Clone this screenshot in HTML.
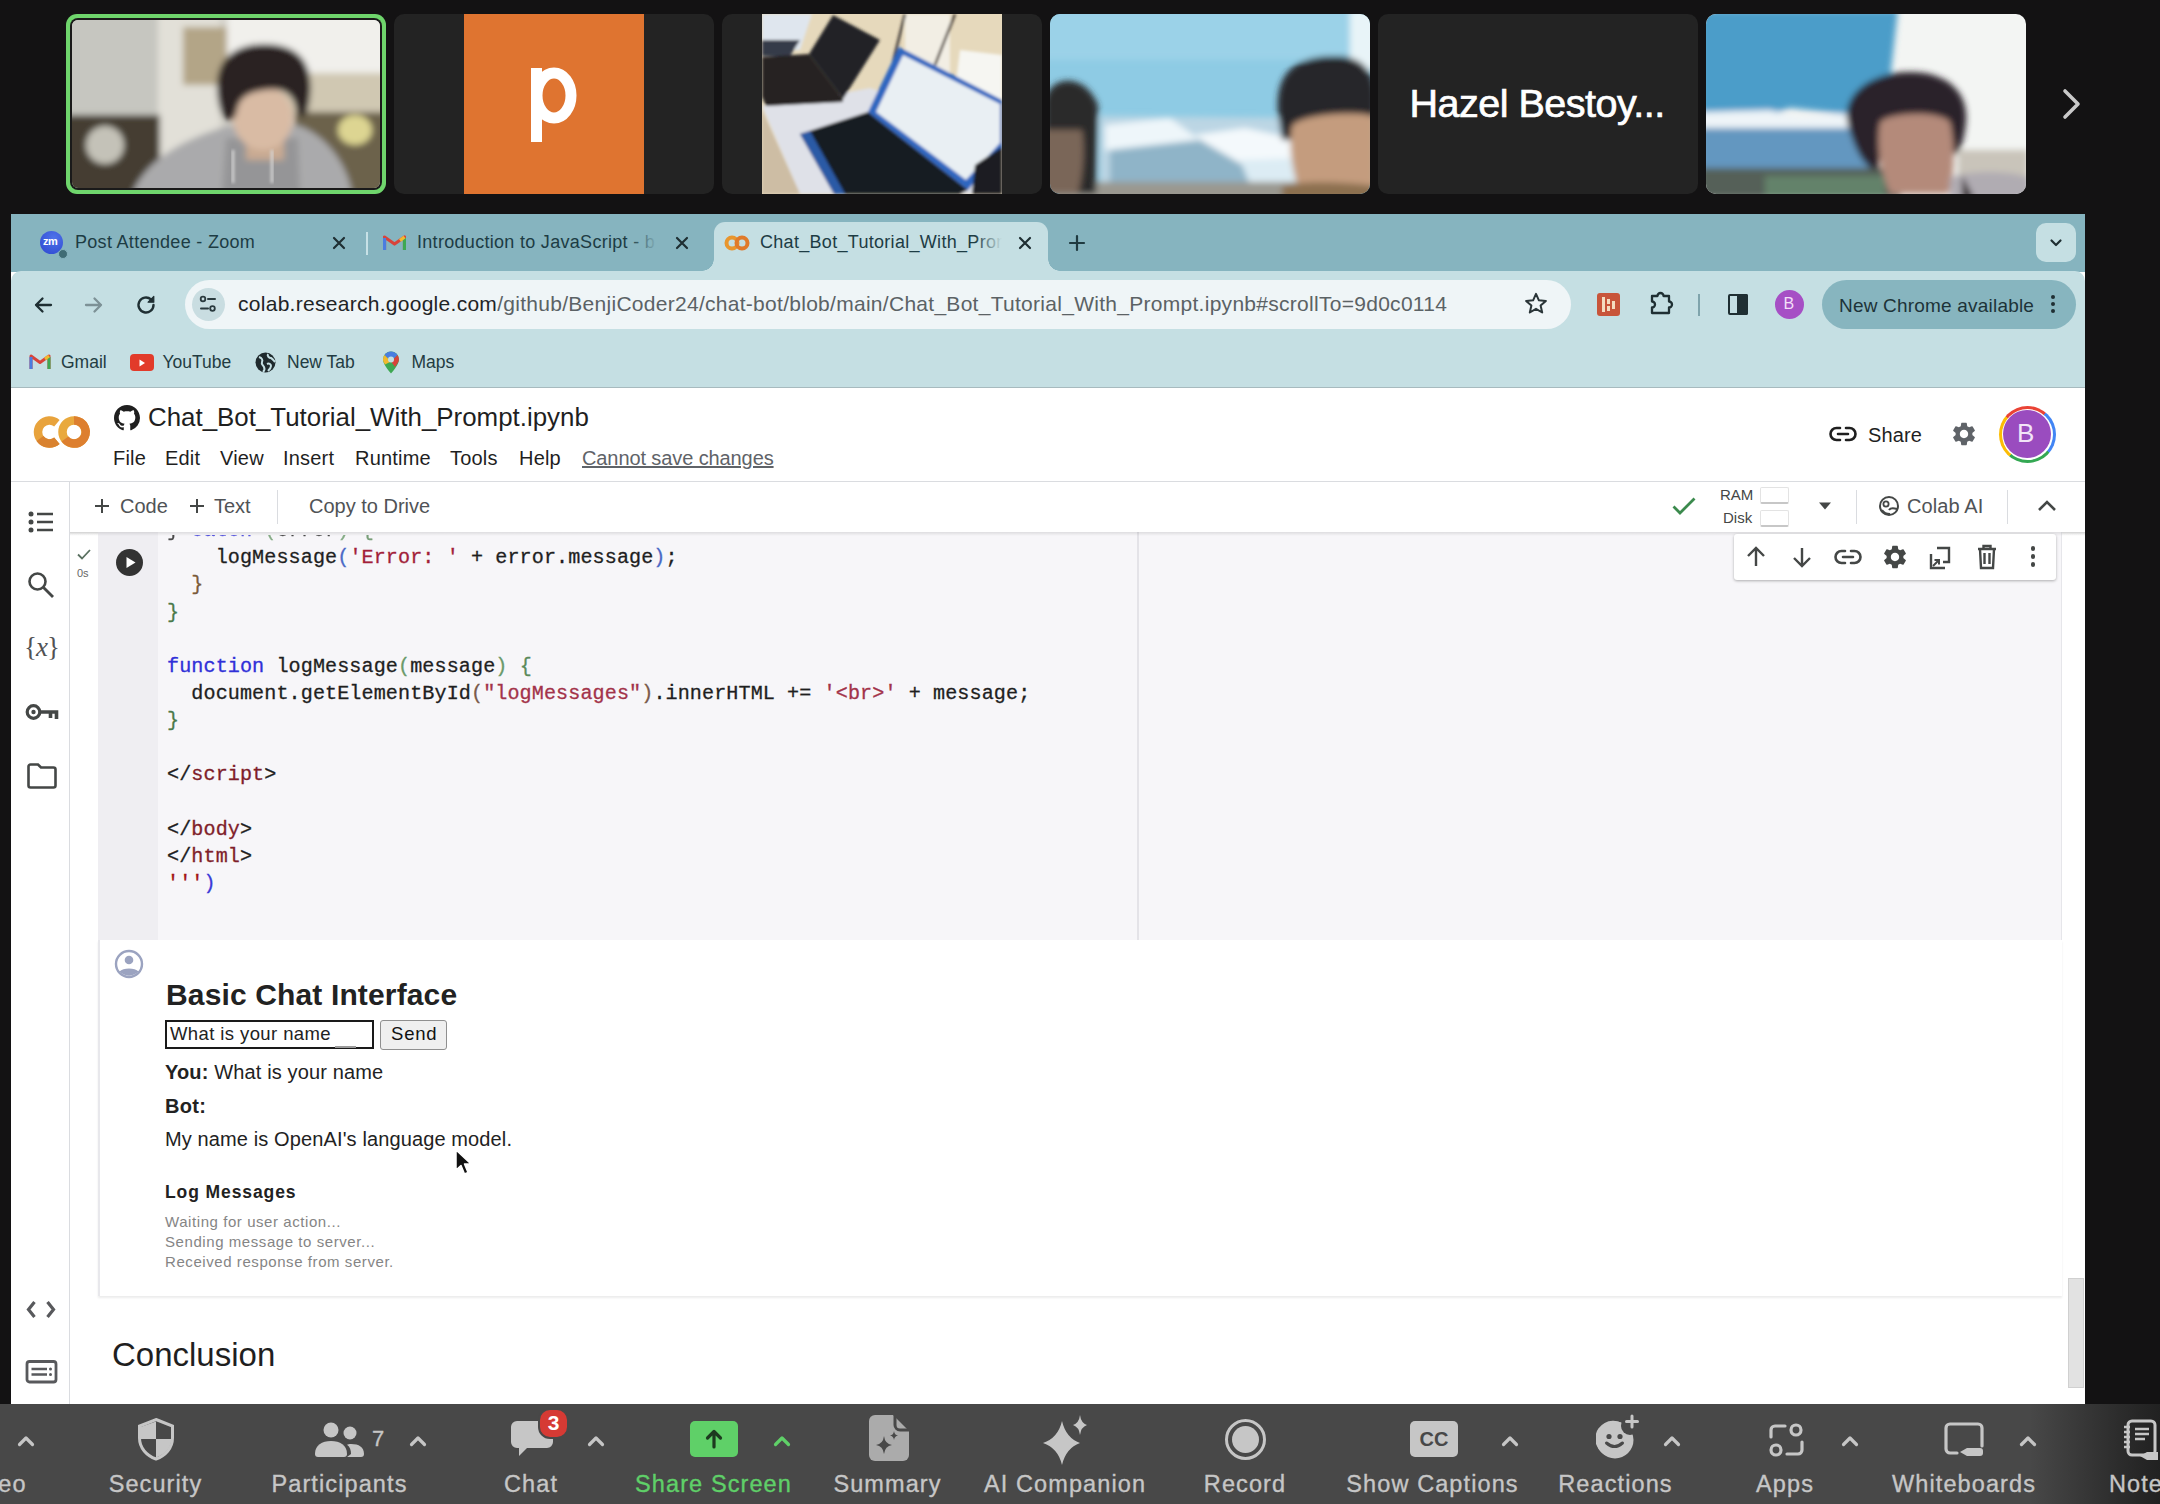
<!DOCTYPE html>
<html><head><meta charset="utf-8">
<style>
*{margin:0;padding:0;box-sizing:border-box}
html,body{width:2160px;height:1504px;overflow:hidden;background:#131213;font-family:"Liberation Sans",sans-serif}
.a{position:absolute}
.t{position:absolute;white-space:nowrap;line-height:1}
.mono{font-family:"Liberation Mono",monospace}
.tile{position:absolute;top:14px;width:320px;height:180px;border-radius:10px;background:#232323;overflow:hidden}
svg{display:block}
</style></head>
<body>
<!--STRIP-->
<svg class="a" style="left:0;top:0" width="2160" height="210" viewBox="0 0 2160 210">
<defs>
<filter id="b3" x="-5%" y="-5%" width="110%" height="110%"><feGaussianBlur stdDeviation="3"/></filter>
<filter id="b2" x="-5%" y="-5%" width="110%" height="110%"><feGaussianBlur stdDeviation="1.6"/></filter>
<clipPath id="c1"><rect x="72" y="20" width="308" height="168" rx="6"/></clipPath>
<clipPath id="c3"><rect x="762" y="14" width="240" height="180"/></clipPath>
<clipPath id="c4"><rect x="1050" y="14" width="320" height="180" rx="10"/></clipPath>
<clipPath id="c6"><rect x="1706" y="14" width="320" height="180" rx="10"/></clipPath>
</defs>
<!-- tile1 -->
<rect x="66" y="14" width="320" height="180" rx="11" fill="#6fd56c"/>
<rect x="70" y="18" width="312" height="172" rx="8" fill="#1a1a1a"/>
<g clip-path="url(#c1)">
 <rect x="72" y="20" width="308" height="168" fill="#d2d0c8"/>
 <g filter="url(#b3)">
  <rect x="60" y="10" width="100" height="105" fill="#c6c6c0"/>
  <rect x="158" y="10" width="62" height="190" fill="#e2e0d8"/>
  <rect x="183" y="27" width="44" height="58" fill="#b3a587"/>
  <rect x="227" y="10" width="160" height="65" fill="#f1f0ec"/>
  <rect x="227" y="73" width="160" height="42" fill="#d0c8b2"/>
  <rect x="60" y="115" width="100" height="90" fill="#443c31"/>
  <ellipse cx="105" cy="145" rx="19" ry="19" fill="#c4c2b8"/>
  <rect x="295" y="112" width="95" height="90" fill="#6c624b"/>
  <ellipse cx="355" cy="130" rx="17" ry="15" fill="#ddd592"/>
  <path d="M132 194C145 160 185 138 228 126H300C330 138 348 168 352 194Z" fill="#aaaaac"/>
  <path d="M222 194L226 138H298L300 194Z" fill="#959597"/>
  <rect x="246" y="135" width="38" height="25" fill="#c9aa92"/>
  <ellipse cx="263" cy="118" rx="30" ry="32" fill="#d9bba4"/>
  <path d="M219 105C210 62 232 44 264 44C300 44 316 64 309 104C306 120 298 122 295 104C290 90 278 88 264 90C250 92 240 96 237 110C234 126 223 124 219 105Z" fill="#2b2420"/>
 </g>
 <path d="M233 150V183M272 150V183" stroke="#d8d8d8" stroke-width="2.5" filter="url(#b2)"/>
</g>
<!-- tile2 -->
<rect x="394" y="14" width="320" height="180" rx="10" fill="#232323"/>
<rect x="464" y="14" width="180" height="180" fill="#df7430"/>
<path d="M536.5 68V142" stroke="#fff" stroke-width="11"/>
<ellipse cx="554" cy="95.5" rx="17" ry="22.5" fill="none" stroke="#fff" stroke-width="11"/>
<!-- tile3 -->
<rect x="722" y="14" width="320" height="180" rx="10" fill="#232323"/>
<g clip-path="url(#c3)">
 <rect x="762" y="14" width="240" height="180" fill="#e6d9bc"/>
 <g filter="url(#b2)">
  <rect x="905" y="14" width="45" height="100" fill="#f2eee4"/>
  <path d="M905 14L893 62" stroke="#3a3530" stroke-width="2.5"/>
  <path d="M955 14L935 65" stroke="#4a4038" stroke-width="2.5"/>
  <path d="M960 50L1002 55V100L955 90Z" fill="#f6f6f2"/>
  <path d="M762 106L808 100L870 88L1002 130V194H800Z" fill="#dfe1e8"/>
  <path d="M762 110L800 194H762Z" fill="#cdbda4"/>
  <path d="M762 14H812L800 50H762Z" fill="#dfe6ee"/>
  <path d="M762 40H800L790 56H762Z" fill="#353a48"/>
  <path d="M833 15L880 40L843 99L809 54Z" fill="#222325"/>
  <path d="M762 57L809 54L843 99V102L766 106L762 97Z" fill="#252222"/>
  <path d="M899 47L1002 100V147L968 190L868 112Z" fill="#2e66c0"/>
  <path d="M903 55L1000 104V143L966 180L876 112Z" fill="#e9eff3"/>
  <path d="M800 134L868 112L968 190L960 194H834Z" fill="#161a24"/>
  <path d="M800 134L810 131L845 194H834Z" fill="#2c5aa6"/>
  <path d="M975 165L1002 147V194H972Z" fill="#1c1c20"/>
 </g>
</g>
<!-- tile4 -->
<g clip-path="url(#c4)">
 <rect x="1050" y="14" width="320" height="180" fill="#8ecbe4"/>
 <g filter="url(#b3)">
  <rect x="1040" y="10" width="340" height="50" fill="#9bd2e8"/>
  <rect x="1350" y="10" width="30" height="60" fill="#e8f4f8"/>
  <path d="M1100 116L1310 118L1330 194H1100Z" fill="#bcd6e4"/>
  <path d="M1105 125L1170 118L1200 140L1180 150L1105 150Z" fill="#eef6fa"/>
  <path d="M1195 135L1245 128L1300 140L1300 160L1230 165Z" fill="#f4f9fc"/>
  <path d="M1110 150L1200 140L1260 175L1270 194H1110Z" fill="#8fb4c8"/>
  <path d="M1240 160L1300 158L1300 185H1250Z" fill="#dcecf4"/>
  <rect x="1040" y="182" width="340" height="20" fill="#9a9890"/>
  <path d="M1045 100C1050 75 1085 72 1098 105L1096 194H1045Z" fill="#2c2a2c"/>
  <path d="M1040 130H1082C1085 150 1083 175 1078 194H1040Z" fill="#7a6658"/>
  <path d="M1278 112C1275 68 1300 56 1335 56C1370 56 1378 80 1375 112L1375 140H1282Z" fill="#27272c"/>
  <path d="M1292 126C1300 114 1360 110 1375 117V194H1300C1292 170 1288 145 1292 126Z" fill="#c49c7e"/>
  <path d="M1282 186C1300 181 1340 181 1375 186V200H1282Z" fill="#8c7050"/>
 </g>
</g>
<!-- tile5 -->
<rect x="1378" y="14" width="320" height="180" rx="10" fill="#232323"/>
<!-- tile6 -->
<g clip-path="url(#c6)">
 <rect x="1706" y="14" width="320" height="180" fill="#f3f5f3"/>
 <g filter="url(#b3)">
  <path d="M1700 10H1898L1890 80L1882 118L1790 108L1770 115L1700 112Z" fill="#4c9dc9"/>
  <path d="M1700 112L1770 110L1800 118L1860 112L1875 128V135H1700Z" fill="#eef4f8"/>
  <path d="M1700 128H1870L1878 172H1700Z" fill="#6497c0"/>
  <rect x="1700" y="168" width="200" height="30" fill="#556058"/>
  <rect x="1765" y="176" width="120" height="22" fill="#63826b"/>
  <rect x="1958" y="150" width="70" height="28" fill="#c9c4ba"/>
  <path d="M1848 125C1840 95 1870 72 1910 72C1950 72 1972 95 1965 130C1962 150 1955 160 1950 150L1945 120H1885L1878 170C1865 170 1855 150 1848 125Z" fill="#29232a"/>
  <path d="M1880 122C1890 112 1940 110 1950 122C1956 150 1954 178 1948 194H1890C1880 170 1876 145 1880 122Z" fill="#b48a7a"/>
  <path d="M1950 178C1968 170 2010 170 2030 178V200H1950Z" fill="#b0acb2"/>
  <path d="M1962 175L1975 200H1962Z" fill="#3a3234"/>
 </g>
</g>
<!-- chevron -->
<path d="M2065 91L2078 104L2065 117" fill="none" stroke="#c9c9c9" stroke-width="3.6" stroke-linecap="round" stroke-linejoin="round"/>
</svg>
<div class="t" style="left:1409.5px;top:84.3px;color:#fff;font-size:39.5px;letter-spacing:-0.5px;-webkit-text-stroke:0.7px #fff">Hazel Bestoy...</div>
<!--/STRIP-->

<!--CHROME-->

<div class="a" style="left:11px;top:214px;width:2074px;height:1190px;background:#fff"></div>
<div class="a" style="left:11px;top:214px;width:2074px;height:58px;background:#86b4bf"></div>
<div class="a" style="left:11px;top:271px;width:2074px;height:116px;background:#c5dfe3;border-radius:10px 10px 0 0"></div>
<div class="a" style="left:11px;top:387px;width:2074px;height:1px;background:#a7babe"></div>
<!-- active tab -->
<div class="a" style="left:714px;top:222px;width:334px;height:52px;background:#c5dfe3;border-radius:11px 11px 0 0"></div>
<div class="a" style="left:702px;top:259px;width:12px;height:12px;background:radial-gradient(circle at 0 0,#86b4bf 11.5px,#c5dfe3 12px)"></div>
<div class="a" style="left:1048px;top:259px;width:12px;height:12px;background:radial-gradient(circle at 100% 0,#86b4bf 11.5px,#c5dfe3 12px)"></div>
<!-- tab1 -->
<div class="a" style="left:39.5px;top:231px;width:23px;height:23px;border-radius:50%;background:radial-gradient(circle at 60% 30%,#4f73ea,#2c46cf)"></div>
<div class="t" style="left:43px;top:236px;font-size:11px;color:#fff;font-weight:bold;letter-spacing:-0.5px">zm</div>
<div class="a" style="left:58px;top:249px;width:10px;height:10px;border-radius:50%;background:#3f6c75;border:1.5px solid #86b4bf"></div>
<div class="t" style="left:75px;top:233.1px;font-size:18px;letter-spacing:0.3px;color:#1d3c44">Post Attendee - Zoom</div>
<svg class="a" style="left:332px;top:236px" width="14" height="14" viewBox="0 0 14 14"><path d="M2 2L12 12M12 2L2 12" stroke="#1f2f33" stroke-width="2.2" stroke-linecap="round"/></svg>
<div class="a" style="left:366px;top:232px;width:2px;height:23px;background:#c7e1e6"></div>
<!-- tab2 -->
<svg class="a" style="left:383px;top:234px" width="23" height="17" viewBox="0 0 23 17"><path d="M1.5 16V3L11.5 10L21.5 3V16" fill="none" stroke="#d8433a" stroke-width="3.2" stroke-linejoin="round"/><path d="M1.5 16V4" stroke="#4a7de0" stroke-width="3.2"/><path d="M21.5 16V4" stroke="#3ea852" stroke-width="3.2"/><path d="M17 6.5L21.5 3" stroke="#f2b92e" stroke-width="3.2"/></svg>
<div class="t" style="left:417px;top:233.1px;font-size:18px;letter-spacing:0.3px;color:#1d3c44">Introduction to JavaScript - b</div>
<div class="a" style="left:630px;top:228px;width:34px;height:32px;background:linear-gradient(90deg,rgba(134,180,191,0),#86b4bf 80%)"></div>
<svg class="a" style="left:675px;top:236px" width="14" height="14" viewBox="0 0 14 14"><path d="M2 2L12 12M12 2L2 12" stroke="#1f2f33" stroke-width="2.2" stroke-linecap="round"/></svg>
<!-- tab3 -->
<svg class="a" style="left:724px;top:235px" width="26" height="16" viewBox="0 0 26 16"><circle cx="8" cy="8" r="5.5" fill="none" stroke="#e8962e" stroke-width="4"/><circle cx="18" cy="8" r="5.5" fill="none" stroke="#e07a2a" stroke-width="4"/></svg>
<div class="t" style="left:760px;top:228px;height:30px;padding-top:5.1px;width:246px;overflow:hidden;font-size:18px;letter-spacing:0.3px;color:#1d3c44">Chat_Bot_Tutorial_With_Prom</div>
<div class="a" style="left:975px;top:228px;width:34px;height:32px;background:linear-gradient(90deg,rgba(197,223,227,0),#c5dfe3 80%)"></div>
<svg class="a" style="left:1018px;top:236px" width="14" height="14" viewBox="0 0 14 14"><path d="M2 2L12 12M12 2L2 12" stroke="#1f2f33" stroke-width="2.2" stroke-linecap="round"/></svg>
<svg class="a" style="left:1068px;top:234px" width="18" height="18" viewBox="0 0 18 18"><path d="M9 2V16M2 9H16" stroke="#1f3a40" stroke-width="2.2" stroke-linecap="round"/></svg>
<!-- tab dropdown -->
<div class="a" style="left:2036px;top:223px;width:40px;height:39px;border-radius:10px;background:#c5dfe3"></div>
<svg class="a" style="left:2048px;top:235px" width="16" height="16" viewBox="0 0 16 16"><path d="M3.5 5.5L8 10L12.5 5.5" fill="none" stroke="#1f2f33" stroke-width="2.2" stroke-linecap="round" stroke-linejoin="round"/></svg>
<!-- nav -->
<svg class="a" style="left:31px;top:293px" width="24" height="24" viewBox="0 0 24 24"><path d="M20 12H5M11.5 5.5L5 12L11.5 18.5" fill="none" stroke="#1f2f33" stroke-width="2.3" stroke-linecap="round" stroke-linejoin="round"/></svg>
<svg class="a" style="left:82px;top:293px" width="24" height="24" viewBox="0 0 24 24"><path d="M4 12H19M12.5 5.5L19 12L12.5 18.5" fill="none" stroke="#7d9196" stroke-width="2.3" stroke-linecap="round" stroke-linejoin="round"/></svg>
<svg class="a" style="left:134px;top:293px" width="24" height="24" viewBox="0 0 24 24"><path d="M19.5 12A7.5 7.5 0 1 1 17 6.4" fill="none" stroke="#1f2f33" stroke-width="2.4" stroke-linecap="round"/><path d="M19.8 3.5V9.2H14.1Z" fill="#1f2f33" stroke="#1f2f33" stroke-width="1.2" stroke-linejoin="round"/></svg>
<!-- omnibox -->
<div class="a" style="left:185px;top:280px;width:1386px;height:49px;border-radius:25px;background:#eff5f7"></div>
<div class="a" style="left:191.5px;top:287.5px;width:33px;height:33px;border-radius:50%;background:#c9dde1"></div>
<svg class="a" style="left:198px;top:294px" width="20" height="20" viewBox="0 0 20 20"><circle cx="5" cy="5" r="2.3" fill="none" stroke="#2a3a3e" stroke-width="1.8"/><path d="M10 5H17" stroke="#2a3a3e" stroke-width="2" stroke-linecap="round"/><circle cx="14.5" cy="14.5" r="2.3" fill="none" stroke="#2a3a3e" stroke-width="1.8"/><path d="M3 14.5H10" stroke="#2a3a3e" stroke-width="2" stroke-linecap="round"/></svg>
<div class="t" style="left:238px;top:293.2px;font-size:21px;letter-spacing:0.28px;color:#1f2426">colab.research.google.com<span style="color:#5b6265">/github/BenjiCoder24/chat-bot/blob/main/Chat_Bot_Tutorial_With_Prompt.ipynb#scrollTo=9d0c0114</span></div>
<svg class="a" style="left:1523px;top:291px" width="26" height="26" viewBox="0 0 26 26"><path d="M13 2.8L15.9 9.3L22.9 9.9L17.6 14.6L19.2 21.5L13 17.8L6.8 21.5L8.4 14.6L3.1 9.9L10.1 9.3Z" fill="none" stroke="#2a3538" stroke-width="2" stroke-linejoin="round"/></svg>
<!-- ext icons -->
<div class="a" style="left:1597px;top:293px;width:23px;height:23px;border-radius:3px;background:#c8553a"></div>
<div class="a" style="left:1602px;top:297px;width:3px;height:15px;background:#f4dcc0"></div>
<div class="a" style="left:1607px;top:299px;width:3px;height:5px;background:#f4dcc0"></div>
<div class="a" style="left:1607px;top:306px;width:3px;height:5px;background:#f4dcc0"></div>
<div class="a" style="left:1612px;top:301px;width:3px;height:8px;background:#f4dcc0"></div>
<svg class="a" style="left:1647px;top:290px" width="28" height="28" viewBox="0 0 28 28"><path d="M4 8H9.5A3 3 0 0 1 15.5 8H21V13.5A3 3 0 0 1 21 19.5V25H4V19.5A3 3 0 0 0 4 13.5Z" fill="none" stroke="#1f2f33" stroke-width="2.3" stroke-linejoin="round" transform="translate(1,-2)"/></svg>
<div class="a" style="left:1698px;top:294px;width:2px;height:22px;background:#7fa4ac"></div>
<div class="a" style="left:1728px;top:294px;width:20px;height:21px;border:2.4px solid #1f2f33;border-radius:2px"></div>
<div class="a" style="left:1737px;top:294px;width:11px;height:21px;background:#1f2f33;border-radius:0 2px 2px 0"></div>
<div class="a" style="left:1775px;top:290px;width:29px;height:29px;border-radius:50%;background:#a64fc5"></div>
<div class="t" style="left:1783.5px;top:296px;font-size:16px;color:#f3dff8">B</div>
<div class="a" style="left:1822px;top:280px;width:254px;height:49px;border-radius:25px;background:#87b5bf"></div>
<div class="t" style="left:1839px;top:296.3px;font-size:19px;letter-spacing:0.2px;color:#1d3338">New Chrome available</div>
<div class="a" style="left:2051px;top:295px;width:4px;height:4px;border-radius:50%;background:#1f2f33;box-shadow:0 7px 0 #1f2f33,0 14px 0 #1f2f33"></div>
<!-- bookmarks -->
<svg class="a" style="left:29px;top:353px" width="22" height="17" viewBox="0 0 22 17"><path d="M2 16V3L11 9.5L20 3V16" fill="none" stroke="#d8433a" stroke-width="3" stroke-linejoin="round"/><path d="M2 16V4" stroke="#4a7de0" stroke-width="3"/><path d="M20 16V4" stroke="#3ea852" stroke-width="3"/><path d="M16 6L20 3" stroke="#f2b92e" stroke-width="3"/></svg>
<div class="t" style="left:61px;top:353.6px;font-size:17.5px;color:#233c42">Gmail</div>
<div class="a" style="left:130px;top:354px;width:24px;height:17px;border-radius:4px;background:#e23b2a"></div>
<svg class="a" style="left:137px;top:358px" width="10" height="10" viewBox="0 0 10 10"><path d="M2.5 1.5L8 5L2.5 8.5Z" fill="#fff"/></svg>
<div class="t" style="left:162.5px;top:353.6px;font-size:17.5px;color:#233c42">YouTube</div>
<svg class="a" style="left:254px;top:351px" width="23" height="23" viewBox="0 0 23 23"><circle cx="11.5" cy="11.5" r="10" fill="#1f2a2d"/><path d="M5 6C8 7 9 9 8 11C7 13 9 14 10 16C11 18 10 20 9 21M14 3C13 5 15 7 17 7C19 8 20 10 21 11M13 13C15 12 17 13 17 15C17 17 15 19 14 20" fill="none" stroke="#c5dfe3" stroke-width="2"/></svg>
<div class="t" style="left:287px;top:353.6px;font-size:17.5px;color:#233c42">New Tab</div>
<svg class="a" style="left:381px;top:350px" width="20" height="25" viewBox="0 0 20 25"><path d="M10 1.5A8 8 0 0 0 2 9.5C2 15 10 23.5 10 23.5S18 15 18 9.5A8 8 0 0 0 10 1.5Z" fill="#3ea852"/><path d="M10 1.5A8 8 0 0 0 3.5 5L10 11.5L16.5 5A8 8 0 0 0 10 1.5Z" fill="#4a7de0"/><path d="M3.5 5A8 8 0 0 0 2 9.5C2 11 3 13 4 14.5L10 11.5Z" fill="#f2b92e"/><path d="M16.5 5L10 11.5L14 17C16 14 18 11.5 18 9.5A8 8 0 0 0 16.5 5Z" fill="#d8433a"/><circle cx="10" cy="9.5" r="3" fill="#c5dfe3"/></svg>
<div class="t" style="left:411.5px;top:353.6px;font-size:17.5px;color:#233c42">Maps</div>


<!-- COLAB HEADER -->
<svg class="a" style="left:32px;top:413px" width="60" height="38" viewBox="0 0 60 38"><path d="M24.9 10.2A11.5 11.5 0 1 0 24.9 27.8" fill="none" stroke="#e8a33c" stroke-width="8.5"/><path d="M8 25.5A11.5 11.5 0 0 0 24.9 27.8" fill="none" stroke="#d9822f" stroke-width="8.5"/><circle cx="42" cy="19" r="11.5" fill="none" stroke="#e9a93d" stroke-width="8.5"/><path d="M42 7.5A11.5 11.5 0 0 1 50 27.5A11.5 11.5 0 0 1 33 26" fill="none" stroke="#dd7f2f" stroke-width="8.5"/></svg>
<svg class="a" style="left:114px;top:405px" width="26" height="26" viewBox="0 0 16 16"><path fill="#1f1f1f" d="M8 0C3.58 0 0 3.58 0 8c0 3.54 2.29 6.53 5.47 7.59.4.07.55-.17.55-.38 0-.19-.01-.82-.01-1.49-2.01.37-2.53-.49-2.69-.94-.09-.23-.48-.94-.82-1.13-.28-.15-.68-.52-.01-.53.63-.01 1.08.58 1.23.82.72 1.21 1.87.87 2.33.66.07-.52.28-.87.51-1.07-1.78-.2-3.64-.89-3.640-3.950 0-.87.31-1.590.82-2.150-.08-.2-.36-1.020.08-2.120 0 0 .67-.21 2.200.82.64-.18 1.32-.27 2-.27.68 0 1.36.09 2 .27 1.53-1.040 2.200-.82 2.200-.82.44 1.100.16 1.920.08 2.120.51.56.82 1.270.82 2.150 0 3.070-1.870 3.750-3.650 3.950.29.25.54.73.54 1.480 0 1.070-.01 1.930-.01 2.200 0 .21.15.46.55.38A8.013 8.013 0 0016 8c0-4.420-3.580-8-8-8z"/></svg>
<div class="t" style="left:148px;top:405px;font-size:25.9px;color:#1f1f1f">Chat_Bot_Tutorial_With_Prompt.ipynb</div>
<div class="t" style="left:113px;top:448px;font-size:20px;letter-spacing:0.2px;color:#1f1f1f">File</div>
<div class="t" style="left:165px;top:448px;font-size:20px;letter-spacing:0.2px;color:#1f1f1f">Edit</div>
<div class="t" style="left:220px;top:448px;font-size:20px;letter-spacing:0.2px;color:#1f1f1f">View</div>
<div class="t" style="left:283px;top:448px;font-size:20px;letter-spacing:0.2px;color:#1f1f1f">Insert</div>
<div class="t" style="left:355px;top:448px;font-size:20px;letter-spacing:0.2px;color:#1f1f1f">Runtime</div>
<div class="t" style="left:450px;top:448px;font-size:20px;letter-spacing:0.2px;color:#1f1f1f">Tools</div>
<div class="t" style="left:519px;top:448px;font-size:20px;letter-spacing:0.2px;color:#1f1f1f">Help</div>
<div class="t" style="left:582px;top:448px;font-size:20px;letter-spacing:-0.1px;color:#5f6368;text-decoration:underline">Cannot save changes</div>
<svg class="a" style="left:1829px;top:422px" width="28" height="24" viewBox="0 0 28 24"><path d="M11 6H7.5A6 6 0 0 0 7.5 18H11M17 6H20.5A6 6 0 0 1 20.5 18H17M9 12H19" fill="none" stroke="#1f1f1f" stroke-width="2.6" stroke-linecap="round"/></svg>
<div class="t" style="left:1868px;top:424.5px;font-size:20px;letter-spacing:0.1px;color:#1f1f1f">Share</div>
<svg class="a" style="left:1950px;top:420px" width="28" height="28" viewBox="0 0 24 24"><path fill="#5f6368" d="M19.14 12.94c.04-.3.06-.61.06-.94 0-.32-.02-.64-.07-.94l2.03-1.58a.49.49 0 0 0 .12-.61l-1.92-3.32a.488.488 0 0 0-.59-.22l-2.39.96c-.5-.38-1.03-.7-1.62-.94l-.36-2.54a.484.484 0 0 0-.48-.41h-3.84c-.24 0-.43.17-.47.41l-.36 2.54c-.59.24-1.13.57-1.62.94l-2.39-.96c-.22-.08-.47 0-.59.22L2.74 8.87c-.12.21-.08.47.12.61l2.03 1.58c-.05.3-.09.63-.09.94s.02.64.07.94l-2.030 1.580a.49.49 0 0 0-.12.61l1.92 3.32c.12.22.37.29.59.22l2.39-.96c.5.38 1.03.7 1.62.94l.36 2.54c.05.24.24.41.48.41h3.84c.24 0 .44-.17.47-.41l.36-2.54c.59-.24 1.13-.56 1.62-.94l2.39.96c.22.08.47 0 .59-.22l1.92-3.32c.12-.22.07-.47-.12-.61l-2.01-1.58zM12 15.6c-1.98 0-3.6-1.62-3.6-3.6s1.62-3.6 3.6-3.6 3.6 1.62 3.6 3.6-1.62 3.6-3.6 3.6z"/></svg>
<div class="a" style="left:1998.5px;top:405.5px;width:57px;height:57px;border-radius:50%;background:conic-gradient(from -50deg,#ea4335 0 25%,#4285f4 25% 50%,#34a853 50% 75%,#fbbc05 75% 100%)"></div>
<div class="a" style="left:2001.5px;top:408.5px;width:51px;height:51px;border-radius:50%;background:#fff"></div>
<div class="a" style="left:2003px;top:410px;width:48px;height:48px;border-radius:50%;background:#9a4cbf"></div>
<div class="t" style="left:2017px;top:420px;font-size:26px;color:#f2e4f7">B</div>
<div class="a" style="left:11px;top:481px;width:2074px;height:1px;background:#dadce0"></div>
<!-- COLAB TOOLBAR -->
<div class="a" style="left:69px;top:482px;width:1px;height:922px;background:#dadce0"></div>
<svg class="a" style="left:93px;top:497px" width="18" height="18" viewBox="0 0 18 18"><path d="M9 2V16M2 9H16" stroke="#444746" stroke-width="2"/></svg>
<div class="t" style="left:120px;top:496.1px;font-size:20px;color:#505356">Code</div>
<svg class="a" style="left:188px;top:497px" width="18" height="18" viewBox="0 0 18 18"><path d="M9 2V16M2 9H16" stroke="#444746" stroke-width="2"/></svg>
<div class="t" style="left:214px;top:496.1px;font-size:20px;color:#505356">Text</div>
<div class="a" style="left:277px;top:490px;width:1px;height:34px;background:#dadce0"></div>
<div class="t" style="left:309px;top:496.1px;font-size:20px;color:#505356">Copy to Drive</div>
<svg class="a" style="left:1671px;top:495px" width="26" height="22" viewBox="0 0 26 22"><path d="M2.5 11.5L9 18L23.5 3.5" fill="none" stroke="#3b8a4d" stroke-width="2.8"/></svg>
<div class="t" style="left:1720px;top:487px;font-size:15px;color:#444746">RAM</div>
<div class="t" style="left:1723px;top:510px;font-size:15px;color:#444746">Disk</div>
<div class="a" style="left:1760px;top:487px;width:29px;height:17px;border:1px solid #e3e3e3;border-bottom:2px solid #c7c7c7;border-radius:2px"></div>
<div class="a" style="left:1760px;top:510px;width:29px;height:17px;border:1px solid #e3e3e3;border-bottom:2px solid #c7c7c7;border-radius:2px"></div>
<svg class="a" style="left:1816px;top:500px" width="18" height="12" viewBox="0 0 18 12"><path d="M3 2.5H15L9 9.5Z" fill="#444746"/></svg>
<div class="a" style="left:1856px;top:490px;width:1px;height:34px;background:#dadce0"></div>
<svg class="a" style="left:1878px;top:495px" width="22" height="22" viewBox="0 0 22 22"><circle cx="11" cy="11" r="9" fill="none" stroke="#444746" stroke-width="2"/><circle cx="8" cy="9" r="2.6" fill="none" stroke="#444746" stroke-width="1.8"/><path d="M11 15C13 12 16 13 19 14M4 15C6 18 9 19 12 19" fill="none" stroke="#444746" stroke-width="2"/></svg>
<div class="t" style="left:1907px;top:496.3px;font-size:20px;letter-spacing:0.1px;color:#505356">Colab AI</div>
<div class="a" style="left:2007px;top:490px;width:1px;height:34px;background:#dadce0"></div>
<svg class="a" style="left:2036px;top:497px" width="22" height="18" viewBox="0 0 22 18"><path d="M3 13L11 5L19 13" fill="none" stroke="#444746" stroke-width="2.6"/></svg>
<div class="a" style="left:70px;top:532px;width:2015px;height:3px;background:linear-gradient(rgba(0,0,0,0.09),rgba(0,0,0,0))"></div>

<!-- SIDEBAR ICONS -->
<svg class="a" style="left:27px;top:508px" width="28" height="28" viewBox="0 0 28 28"><circle cx="4" cy="6" r="2.5" fill="#444746"/><circle cx="4" cy="14" r="2.5" fill="#444746"/><circle cx="4" cy="22" r="2.5" fill="#444746"/><path d="M10 6H26M10 14H26M10 22H26" stroke="#444746" stroke-width="2.4"/></svg>
<svg class="a" style="left:26px;top:570px" width="30" height="30" viewBox="0 0 30 30"><circle cx="11.5" cy="11.5" r="8" fill="none" stroke="#444746" stroke-width="2.6"/><path d="M17.5 17.5L27 27" stroke="#444746" stroke-width="2.8"/></svg>
<div class="t" style="left:24px;top:634px;font-size:27px;letter-spacing:-1px;color:#515254;font-family:'Liberation Serif',serif">{<i>x</i>}</div>
<svg class="a" style="left:25px;top:700px" width="34" height="24" viewBox="0 0 34 24"><circle cx="8.5" cy="12" r="6.3" fill="none" stroke="#444746" stroke-width="3.2"/><circle cx="8.5" cy="12" r="2.2" fill="#444746"/><path d="M14.5 12H31.5V19M25.5 12V18" fill="none" stroke="#444746" stroke-width="3.6"/></svg>
<svg class="a" style="left:26px;top:762px" width="32" height="28" viewBox="0 0 32 28"><path d="M2.5 4.5A2 2 0 0 1 4.5 2.5H12L15 5.5H27.5A2 2 0 0 1 29.5 7.5V23.5A2 2 0 0 1 27.5 25.5H4.5A2 2 0 0 1 2.5 23.5Z" fill="none" stroke="#444746" stroke-width="2.6"/></svg>
<svg class="a" style="left:24px;top:1298px" width="34" height="24" viewBox="0 0 34 24"><path d="M10.5 4L4.5 11.5L10.5 19M23.5 4L29.5 11.5L23.5 19" fill="none" stroke="#58595c" stroke-width="3.2"/></svg><svg class="a" style="left:24px;top:1358px" width="34" height="28" viewBox="0 0 34 28"><rect x="3" y="3.5" width="29" height="20.5" rx="2.5" fill="none" stroke="#58595c" stroke-width="2.8"/><path d="M7.5 11H23M7.5 16.5H23" stroke="#58595c" stroke-width="2.6"/><circle cx="26.5" cy="11" r="1.5" fill="#58595c"/><circle cx="26.5" cy="16.5" r="1.5" fill="#58595c"/></svg>

<!-- CODE CELL -->
<div class="a" style="left:98px;top:532px;width:1964px;height:408px;background:#f7f6f9"></div>
<div class="a" style="left:98px;top:532px;width:60px;height:408px;background:#efeef2"></div>
<div class="a" style="left:1137px;top:532px;width:2px;height:408px;background:#e4e3e8"></div>
<div class="a" style="left:2061px;top:532px;width:1px;height:408px;background:#e6e6ea"></div>
<svg class="a" style="left:76px;top:547px" width="16" height="14" viewBox="0 0 16 14"><path d="M2 7.5L6 11.5L14 3" fill="none" stroke="#5a7060" stroke-width="1.8"/></svg>
<div class="t" style="left:77px;top:568px;font-size:11px;color:#666">0s</div>
<div class="a" style="left:115.5px;top:548.5px;width:27px;height:27px;border-radius:50%;background:#333"></div>
<svg class="a" style="left:115.5px;top:548.5px" width="27" height="27" viewBox="0 0 27 27"><path d="M10.5 8L19.5 13.5L10.5 19Z" fill="#fff"/></svg>
<div class="a mono" style="left:167px;top:535px;width:960px;height:397px;overflow:hidden;font-size:20.1px;letter-spacing:0.1px;line-height:27.15px;color:#1f1f1f;white-space:pre;-webkit-text-stroke:0.3px"><div style="height:27.15px;margin-top:-17.8px;opacity:0.8"><span style="color:#1f1f1f">}</span> <span style="color:#3030d8">catch</span> <span style="color:#6a9a6a">(</span>error<span style="color:#6a9a6a">)</span> <span style="color:#5a8a5a">{</span></div><div style="height:27.15px">    logMessage<span style="color:#4b69c6">(</span><span style="color:#a31f3a">'Error: '</span> + error.message<span style="color:#4b69c6">)</span>;</div><div style="height:27.15px">  <span style="color:#7a5a3a">}</span></div><div style="height:27.15px"><span style="color:#4a7a4a">}</span></div><div style="height:27.15px"></div><div style="height:27.15px"><span style="color:#3030d8">function</span> logMessage<span style="color:#6a9a6a">(</span>message<span style="color:#6a9a6a">)</span> <span style="color:#5a8a5a">{</span></div><div style="height:27.15px">  document.getElementById<span style="color:#7a5a4a">(</span><span style="color:#a3334a">"logMessages"</span><span style="color:#7a5a4a">)</span>.innerHTML += <span style="color:#a3334a">'&lt;br&gt;'</span> + message;</div><div style="height:27.15px"><span style="color:#4a7a4a">}</span></div><div style="height:27.15px"></div><div style="height:27.15px">&lt;/<span style="color:#7f1e2a">script</span>&gt;</div><div style="height:27.15px"></div><div style="height:27.15px">&lt;/<span style="color:#7f1e2a">body</span>&gt;</div><div style="height:27.15px">&lt;/<span style="color:#7f1e2a">html</span>&gt;</div><div style="height:27.15px"><span style="color:#a31515">'''</span><span style="color:#3a3ad8">)</span></div></div>
<div class="a" style="left:70px;top:532px;width:2015px;height:4px;background:linear-gradient(rgba(0,0,0,0.10),rgba(0,0,0,0))"></div>
<!-- cell toolbar -->
<div class="a" style="left:1734px;top:534px;width:322px;height:46px;background:#fff;border-radius:3px;box-shadow:0 1px 3px rgba(0,0,0,0.3)"></div>
<svg class="a" style="left:1743px;top:544px" width="26" height="26" viewBox="0 0 26 26"><path d="M13 22V4M5 12L13 4L21 12" fill="none" stroke="#444746" stroke-width="2.4"/></svg>
<svg class="a" style="left:1789px;top:544px" width="26" height="26" viewBox="0 0 26 26"><path d="M13 4V22M5 14L13 22L21 14" fill="none" stroke="#444746" stroke-width="2.4"/></svg>
<svg class="a" style="left:1834px;top:543px" width="28" height="28" viewBox="0 0 28 24"><path d="M11 6H7.5A6 6 0 0 0 7.5 18H11M17 6H20.5A6 6 0 0 1 20.5 18H17M9 12H19" fill="none" stroke="#444746" stroke-width="2.6" stroke-linecap="round"/></svg>
<svg class="a" style="left:1881px;top:543px" width="28" height="28" viewBox="0 0 24 24"><path fill="#444746" d="M19.14 12.94c.04-.3.06-.61.06-.94 0-.32-.02-.64-.07-.94l2.03-1.58a.49.49 0 0 0 .12-.61l-1.92-3.32a.488.488 0 0 0-.59-.22l-2.39.96c-.5-.38-1.03-.7-1.62-.94l-.36-2.54a.484.484 0 0 0-.48-.41h-3.84c-.24 0-.43.17-.47.41l-.36 2.54c-.59.24-1.13.57-1.62.94l-2.39-.96c-.22-.08-.47 0-.59.22L2.74 8.87c-.12.21-.08.47.12.61l2.03 1.58c-.05.3-.09.63-.09.94s.02.64.07.94l-2.030 1.580a.49.49 0 0 0-.12.61l1.92 3.32c.12.22.37.29.59.22l2.39-.96c.5.38 1.03.7 1.62.94l.36 2.54c.05.24.24.41.48.41h3.84c.24 0 .44-.17.47-.41l.36-2.54c.59-.24 1.13-.56 1.62-.94l2.39.96c.22.08.47 0 .59-.22l1.92-3.32c.12-.22.07-.47-.12-.61l-2.01-1.58zM12 15.6c-1.98 0-3.6-1.62-3.6-3.6s1.62-3.6 3.6-3.6 3.6 1.62 3.6 3.6-1.62 3.6-3.6 3.6z"/></svg>
<svg class="a" style="left:1927px;top:543px" width="28" height="28" viewBox="0 0 28 28"><path d="M10 5H22V19H16M4 11V25H18" fill="none" stroke="#444746" stroke-width="2.4"/><path d="M6 23L12 17M7.5 17H12V21.5" fill="none" stroke="#444746" stroke-width="2"/></svg>
<svg class="a" style="left:1974px;top:543px" width="26" height="28" viewBox="0 0 26 28"><path d="M4 6H22M9.5 6V3H16.5V6M6 6L7 25H19L20 6M10.5 10V21M15.5 10V21" fill="none" stroke="#444746" stroke-width="2.4"/></svg>
<div class="a" style="left:2030.5px;top:546px;width:4.5px;height:4.5px;border-radius:50%;background:#444746;box-shadow:0 8px 0 #444746,0 16px 0 #444746"></div>

<!-- OUTPUT -->
<div class="a" style="left:98px;top:940px;width:1964px;height:356px;background:#fff;border-left:2px solid #e8e8ec;box-shadow:0 2px 2px rgba(0,0,0,0.08)"></div>
<svg class="a" style="left:114px;top:949px" width="30" height="30" viewBox="0 0 30 30"><circle cx="15" cy="15" r="13" fill="none" stroke="#9ba3c0" stroke-width="2.4"/><circle cx="15" cy="11" r="4.3" fill="#9ba3c0"/><path d="M5.5 22.5C9 18.5 21 18.5 24.5 22.5A13 13 0 0 1 5.5 22.5Z" fill="#9ba3c0"/></svg>
<div class="t" style="left:166px;top:980px;font-size:30px;font-weight:bold;letter-spacing:0.14px;color:#222">Basic Chat Interface</div>
<div class="a" style="left:165px;top:1020px;width:209px;height:29px;border:2px solid #1a1a1a;background:#fff"></div>
<div class="a" style="left:335px;top:1046px;width:21px;height:1.5px;background:#9a9a9a"></div><div class="t" style="left:170px;top:1025px;font-size:18.5px;letter-spacing:0.4px;color:#222">What is your name</div>
<div class="a" style="left:380px;top:1020px;width:67px;height:30px;border:1px solid #8f8f8f;border-radius:3px;background:#efefef"></div>
<div class="t" style="left:391px;top:1025px;font-size:18.5px;letter-spacing:0.8px;color:#111">Send</div>
<div class="t" style="left:165px;top:1062px;font-size:20px;letter-spacing:0.14px;color:#222"><b>You:</b> What is your name</div>
<div class="t" style="left:165px;top:1096px;font-size:20px;letter-spacing:0.3px;color:#222"><b>Bot:</b></div>
<div class="t" style="left:165px;top:1129px;font-size:20px;letter-spacing:0.12px;color:#222">My name is OpenAI's language model.</div>
<div class="t" style="left:165px;top:1184px;font-size:17.5px;font-weight:bold;letter-spacing:0.9px;color:#222">Log Messages</div>
<div class="t" style="left:165px;top:1214px;font-size:15px;letter-spacing:0.57px;color:#858585">Waiting for user action...</div>
<div class="t" style="left:165px;top:1234px;font-size:15px;letter-spacing:0.57px;color:#858585">Sending message to server...</div>
<div class="t" style="left:165px;top:1254px;font-size:15px;letter-spacing:0.57px;color:#858585">Received response from server.</div>
<svg class="a" style="left:453px;top:1148px" width="22" height="30" viewBox="0 0 22 30"><path d="M3 2V22L8 17.5L11.5 26L15 24.5L11.5 16H18Z" fill="#111" stroke="#fff" stroke-width="1.5" stroke-linejoin="round"/></svg>
<div class="t" style="left:112px;top:1338px;font-size:33px;color:#1f1f1f">Conclusion</div>
<div class="a" style="left:2068px;top:1278px;width:16px;height:110px;background:#e2e2e2;border:1px solid #d0d0d0"></div>
<!--/CHROME-->

<!--ZBAR-->
<div class="a" style="left:0;top:1404px;width:2160px;height:100px;background:#484848"></div><div class="t" style="left:-156px;width:300px;text-align:center;top:1472.6px;font-size:23.5px;letter-spacing:1.1px;-webkit-text-stroke:0.35px;color:#c6c6c6">Video</div><svg class="a" style="left:16px;top:1433px" width="20" height="16" viewBox="0 0 20 16"><path d="M3.5 11.5L10 5L16.5 11.5" fill="none" stroke="#c6c6c6" stroke-width="3.2" stroke-linecap="round" stroke-linejoin="round"/></svg><svg class="a" style="left:136px;top:1417px" width="40" height="44" viewBox="0 0 40 44"><path d="M20 2.5L36.5 9V21C36.5 31 29.5 38.5 20 42C10.5 38.5 3.5 31 3.5 21V9Z" fill="none" stroke="#c6c6c6" stroke-width="3"/><path d="M20 4.5V22H4.5V10Z" fill="#c6c6c6"/><path d="M20 22H35.5C35 31 29 37.5 20 40.5Z" fill="#c6c6c6"/></svg><div class="t" style="left:5.5px;width:300px;text-align:center;top:1472.6px;font-size:23.5px;letter-spacing:1.1px;-webkit-text-stroke:0.35px;color:#c6c6c6">Security</div><svg class="a" style="left:314px;top:1421px" width="52" height="38" viewBox="0 0 52 38"><circle cx="17" cy="9" r="7.5" fill="#c6c6c6"/><path d="M1 33C1 24 8 20 17 20C26 20 33 24 33 33A3 3 0 0 1 30 36H4A3 3 0 0 1 1 33Z" fill="#c6c6c6"/><circle cx="36" cy="12" r="6.5" fill="#c6c6c6"/><path d="M33 36H47A3 3 0 0 0 50 33C50 26 45 23 37 23C35 23 34 23.3 33 23.7C36 26 37 29 37 33Z" fill="#c6c6c6"/></svg><div class="t" style="left:372px;top:1428px;font-size:22px;-webkit-text-stroke:0.3px;color:#c6c6c6">7</div><svg class="a" style="left:408px;top:1433px" width="20" height="16" viewBox="0 0 20 16"><path d="M3.5 11.5L10 5L16.5 11.5" fill="none" stroke="#c6c6c6" stroke-width="3.2" stroke-linecap="round" stroke-linejoin="round"/></svg><div class="t" style="left:189.5px;width:300px;text-align:center;top:1472.6px;font-size:23.5px;letter-spacing:1.1px;-webkit-text-stroke:0.35px;color:#c6c6c6">Participants</div><svg class="a" style="left:510px;top:1420px" width="46" height="38" viewBox="0 0 46 38"><path d="M7 1H37A6 6 0 0 1 43 7V22A6 6 0 0 1 37 28H17L9 36V28H7A6 6 0 0 1 1 22V7A6 6 0 0 1 7 1Z" fill="#c6c6c6"/></svg><div class="a" style="left:538px;top:1408px;width:31px;height:31px;border-radius:12px;background:#d63a34;border:2px solid #484848"></div><div class="t" style="left:538px;top:1412px;width:31px;text-align:center;font-size:21px;font-weight:bold;color:#fff">3</div><svg class="a" style="left:586px;top:1433px" width="20" height="16" viewBox="0 0 20 16"><path d="M3.5 11.5L10 5L16.5 11.5" fill="none" stroke="#c6c6c6" stroke-width="3.2" stroke-linecap="round" stroke-linejoin="round"/></svg><div class="t" style="left:381px;width:300px;text-align:center;top:1472.6px;font-size:23.5px;letter-spacing:1.1px;-webkit-text-stroke:0.35px;color:#c6c6c6">Chat</div><div class="a" style="left:690px;top:1421px;width:48px;height:36px;border-radius:5px;background:#5fd068"></div><svg class="a" style="left:702px;top:1427px" width="24" height="24" viewBox="0 0 24 24"><path d="M12 20V5M5.5 11L12 4.5L18.5 11" fill="none" stroke="#1d3a1f" stroke-width="3.2" stroke-linecap="round" stroke-linejoin="round"/></svg><svg class="a" style="left:771.5px;top:1433px" width="20" height="16" viewBox="0 0 20 16"><path d="M3.5 11.5L10 5L16.5 11.5" fill="none" stroke="#5fd068" stroke-width="3.2" stroke-linecap="round" stroke-linejoin="round"/></svg><div class="t" style="left:563.5px;width:300px;text-align:center;top:1472.6px;font-size:23.5px;letter-spacing:1.1px;-webkit-text-stroke:0.35px;color:#5fd068">Share Screen</div><svg class="a" style="left:868px;top:1414px" width="42" height="48" viewBox="0 0 42 48"><path d="M7 1H25L41 17V41A6 6 0 0 1 35 47H7A6 6 0 0 1 1 41V7A6 6 0 0 1 7 1Z" fill="#ababab"/><path d="M27 1V11A5 5 0 0 0 32 16H41" fill="none" stroke="#484848" stroke-width="3"/><path d="M16 22Q17 30 24 31Q17 32 16 40Q15 32 8 31Q15 30 16 22Z" fill="#484848"/><path d="M26 17Q26.5 21 30 21.5Q26.5 22 26 26Q25.5 22 22 21.5Q25.5 21 26 17Z" fill="#484848"/></svg><div class="t" style="left:737.5px;width:300px;text-align:center;top:1472.6px;font-size:23.5px;letter-spacing:1.1px;-webkit-text-stroke:0.35px;color:#c6c6c6">Summary</div><svg class="a" style="left:1040px;top:1413px" width="52" height="52" viewBox="0 0 52 52"><path d="M22 8Q26 25 40 30Q26 35 22 52Q18 35 3 30Q18 25 22 8Z" fill="#c6c6c6"/><path d="M40 2Q41 10 47 12Q41 14 40 22Q39 14 33 12Q39 10 40 2Z" fill="#c6c6c6"/></svg><div class="t" style="left:915px;width:300px;text-align:center;top:1472.6px;font-size:23.5px;letter-spacing:1.1px;-webkit-text-stroke:0.35px;color:#c6c6c6">AI Companion</div><div class="a" style="left:1225px;top:1419px;width:41px;height:41px;border-radius:50%;border:3px solid #c6c6c6"></div><div class="a" style="left:1232px;top:1426px;width:27px;height:27px;border-radius:50%;background:#c6c6c6"></div><div class="t" style="left:1095px;width:300px;text-align:center;top:1472.6px;font-size:23.5px;letter-spacing:1.1px;-webkit-text-stroke:0.35px;color:#c6c6c6">Record</div><div class="a" style="left:1410px;top:1421px;width:48px;height:36px;border-radius:5px;background:#c6c6c6"></div><div class="t" style="left:1410px;width:48px;text-align:center;top:1429px;font-size:20px;font-weight:bold;color:#484848">CC</div><svg class="a" style="left:1499.5px;top:1433px" width="20" height="16" viewBox="0 0 20 16"><path d="M3.5 11.5L10 5L16.5 11.5" fill="none" stroke="#c6c6c6" stroke-width="3.2" stroke-linecap="round" stroke-linejoin="round"/></svg><div class="t" style="left:1282.5px;width:300px;text-align:center;top:1472.6px;font-size:23.5px;letter-spacing:1.1px;-webkit-text-stroke:0.35px;color:#c6c6c6">Show Captions</div><svg class="a" style="left:1596px;top:1413px" width="44" height="48" viewBox="0 0 44 48"><path d="M33 17A18 18 0 1 1 25 9.5" fill="#c6c6c6"/><circle cx="19" cy="27" r="18.5" fill="#c6c6c6"/><circle cx="34" cy="13" r="9" fill="#484848"/><circle cx="13" cy="23.5" r="2.6" fill="#484848"/><circle cx="24" cy="23.5" r="2.6" fill="#484848"/><path d="M10.5 30Q18.5 37 26.5 30" fill="none" stroke="#484848" stroke-width="3" stroke-linecap="round"/><path d="M36 3V14M30.5 8.5H41.5" stroke="#c6c6c6" stroke-width="3" stroke-linecap="round"/></svg><svg class="a" style="left:1662px;top:1433px" width="20" height="16" viewBox="0 0 20 16"><path d="M3.5 11.5L10 5L16.5 11.5" fill="none" stroke="#c6c6c6" stroke-width="3.2" stroke-linecap="round" stroke-linejoin="round"/></svg><div class="t" style="left:1465.5px;width:300px;text-align:center;top:1472.6px;font-size:23.5px;letter-spacing:1.1px;-webkit-text-stroke:0.35px;color:#c6c6c6">Reactions</div><svg class="a" style="left:1767px;top:1421px" width="38" height="38" viewBox="0 0 38 38"><path d="M4 16V9A4 4 0 0 1 8 5H18M35 21V29A4 4 0 0 1 31 33H20" fill="none" stroke="#c6c6c6" stroke-width="3.2" stroke-linecap="round"/><circle cx="29" cy="9" r="5" fill="none" stroke="#c6c6c6" stroke-width="3.2"/><circle cx="9" cy="29" r="5" fill="none" stroke="#c6c6c6" stroke-width="3.2"/></svg><svg class="a" style="left:1840px;top:1433px" width="20" height="16" viewBox="0 0 20 16"><path d="M3.5 11.5L10 5L16.5 11.5" fill="none" stroke="#c6c6c6" stroke-width="3.2" stroke-linecap="round" stroke-linejoin="round"/></svg><div class="t" style="left:1635px;width:300px;text-align:center;top:1472.6px;font-size:23.5px;letter-spacing:1.1px;-webkit-text-stroke:0.35px;color:#c6c6c6">Apps</div><svg class="a" style="left:1943px;top:1421px" width="42" height="36" viewBox="0 0 42 36"><path d="M14 32H7A4 4 0 0 1 3 28V7A4 4 0 0 1 7 3H35A4 4 0 0 1 39 7V25" fill="none" stroke="#c6c6c6" stroke-width="3.2" stroke-linecap="round"/><path d="M17 31L24 27H37A3 3 0 0 1 40 30V32A3 3 0 0 1 37 35H24Z" fill="#c6c6c6"/></svg><svg class="a" style="left:2018px;top:1433px" width="20" height="16" viewBox="0 0 20 16"><path d="M3.5 11.5L10 5L16.5 11.5" fill="none" stroke="#c6c6c6" stroke-width="3.2" stroke-linecap="round" stroke-linejoin="round"/></svg><div class="t" style="left:1814px;width:300px;text-align:center;top:1472.6px;font-size:23.5px;letter-spacing:1.1px;-webkit-text-stroke:0.35px;color:#c6c6c6">Whiteboards</div><div class="a" style="left:2030px;top:1404px;width:130px;height:100px;background:linear-gradient(90deg,rgba(20,20,20,0),rgba(20,20,20,0.55) 70%,rgba(20,20,20,0.75))"></div><svg class="a" style="left:2120px;top:1418px" width="40" height="44" viewBox="0 0 40 44"><rect x="8" y="3" width="27" height="34" rx="4" fill="none" stroke="#c6c6c6" stroke-width="3"/><path d="M4 9H10M4 14H10M4 19H10M4 24H10M4 29H10M15 11H29M15 16H29M15 21H25" stroke="#c6c6c6" stroke-width="2.5"/><path d="M20 38L27 34H38V42H27Z" fill="#c6c6c6"/></svg><div class="t" style="left:2109px;top:1472.6px;font-size:23.5px;letter-spacing:1.1px;-webkit-text-stroke:0.35px;color:#c6c6c6">Notes</div>
<!--/ZBAR-->
</body></html>
